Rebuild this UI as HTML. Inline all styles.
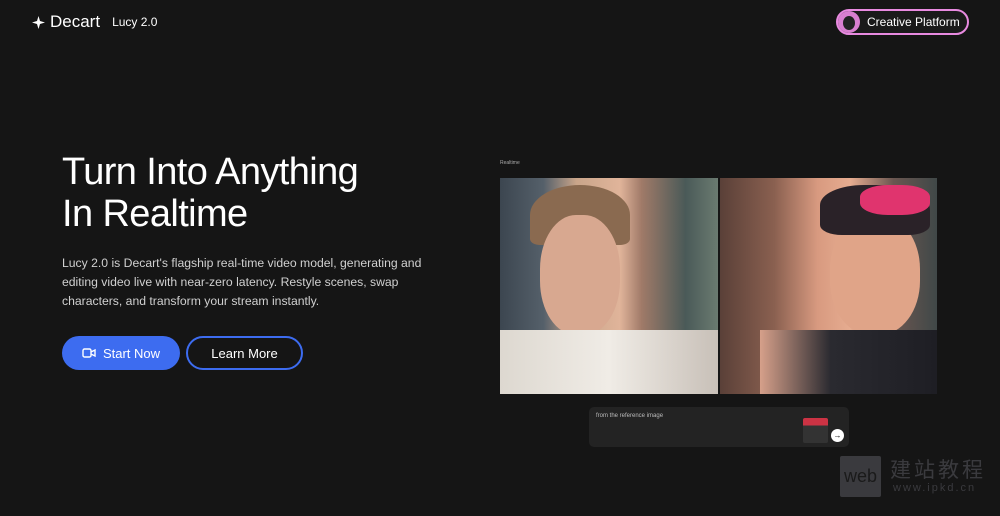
<!DOCTYPE html>
<html><head><meta charset="utf-8"><style>
body{margin:0;width:1000px;height:516px;background:#151515;font-family:"Liberation Sans",sans-serif;color:#fff;position:relative;overflow:hidden}
.a{position:absolute}
</style></head><body>
<div class="a" style="left:31px;top:12px;font-size:17px;font-weight:500;display:flex;align-items:center;gap:4px">
<svg width="15" height="15" viewBox="0 0 15 15"><path d="M7.5 1 L9 6 L14 7.5 L9 9 L7.5 14 L6 9 L1 7.5 L6 6Z" fill="#fff"/></svg>Decart<span style="font-size:12px;margin-left:8px">Lucy 2.0</span></div>
<div class="a" style="left:836px;top:9px;width:129px;height:22px;border:2px solid #e88ae0;border-radius:14px;background:#1a1a1a"></div>
<div class="a" style="left:838px;top:11px;width:22px;height:22px;border-radius:50%;background:#d97fd0"></div>
<div class="a" style="left:843px;top:16px;width:12px;height:14px;border-radius:50%;background:#222"></div>
<div class="a" style="left:867px;top:15px;font-size:12px">Creative Platform</div>

<div class="a" style="left:62px;top:151px;font-size:38px;line-height:42px;letter-spacing:-0.6px">Turn Into Anything<br>In Realtime</div>
<div class="a" style="left:62px;top:254px;width:370px;font-size:12.2px;line-height:19px;color:#d0d0d0">Lucy 2.0 is Decart's flagship real-time video model, generating and editing video live with near-zero latency. Restyle scenes, swap characters, and transform your stream instantly.</div>
<div class="a" style="left:62px;top:336px;width:118px;height:34px;border-radius:17px;background:#3d6cf0;font-size:13px;display:flex;align-items:center;justify-content:center;gap:7px"><svg width="14" height="10" viewBox="0 0 14 10"><rect x="1" y="1" width="8" height="8" rx="1.5" fill="none" stroke="#fff" stroke-width="1.4"/><path d="M9 4 L13 2 V8 L9 6" fill="none" stroke="#fff" stroke-width="1.4"/></svg>Start Now</div>
<div class="a" style="left:186px;top:336px;width:113px;height:30px;border-radius:17px;border:2px solid #3d6cf0;font-size:13px;display:flex;align-items:center;justify-content:center">Learn More</div>

<div class="a" style="left:500px;top:160px;font-size:5px;color:#aaa">Realtime</div>
<div class="a" style="left:500px;top:178px;width:218px;height:216px;background:linear-gradient(90deg,#3c4650 0%,#55606a 20%,#c9a58a 35%,#e0b49a 55%,#a07a68 65%,#4a5a58 85%,#6a7a70 100%)"></div>
<div class="a" style="left:530px;top:185px;width:100px;height:60px;border-radius:50% 50% 10% 10%;background:#8a6a50"></div>
<div class="a" style="left:540px;top:215px;width:80px;height:120px;border-radius:45%;background:#d8a890"></div>
<div class="a" style="left:500px;top:330px;width:218px;height:64px;background:linear-gradient(90deg,#ddd8d0,#f0ece6 50%,#c8c0b8)"></div>
<div class="a" style="left:720px;top:178px;width:217px;height:216px;background:linear-gradient(90deg,#5a4038 0%,#8a6050 25%,#d89a80 45%,#e6ac90 60%,#6a5650 80%,#404848 100%)"></div>
<div class="a" style="left:830px;top:215px;width:90px;height:120px;border-radius:45%;background:#e0a488"></div>
<div class="a" style="left:820px;top:185px;width:110px;height:50px;border-radius:40% 50% 20% 20%;background:#2a2228"></div>
<div class="a" style="left:860px;top:185px;width:70px;height:30px;background:#e0346e;border-radius:40%"></div>
<div class="a" style="left:760px;top:330px;width:177px;height:64px;background:linear-gradient(90deg,#d6a08a,#2a2a30 40%,#1e1e24)"></div>
<div class="a" style="left:589px;top:407px;width:260px;height:40px;border-radius:5px;background:#232323"></div>
<div class="a" style="left:596px;top:413px;font-size:6px;color:#bbb">from the reference image</div>
<div class="a" style="left:803px;top:418px;width:25px;height:25px;border-radius:2px;background:linear-gradient(#c34 0 30%,#333 30%)"></div>
<div class="a" style="left:831px;top:429px;width:13px;height:13px;border-radius:50%;background:#fff;color:#000;font-size:8px;text-align:center;line-height:13px">→</div>
<div class="a" style="left:840px;top:456px;width:41px;height:41px;border-radius:2px;background:#3a3a3e;color:#1a1a1a;font-size:18px;line-height:41px;text-align:center">web</div>
<div class="a" style="left:890px;top:454px;font-family:'Noto Sans CJK SC',sans-serif;font-size:21px;color:#3a3a3e;letter-spacing:3px">建站教程</div>
<div class="a" style="left:893px;top:482px;font-size:11px;color:#3a3a3e;letter-spacing:2px">www.ipkd.cn</div>
</body></html>
